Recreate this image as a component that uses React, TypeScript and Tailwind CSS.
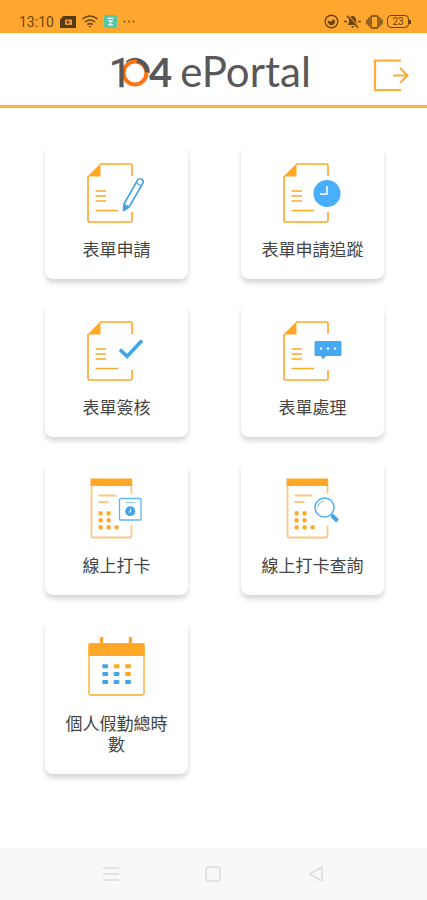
import type { ReactNode } from "react";

const ORANGE = "#ffa726";
const PALE = "#ffc581";
const BLUE = "#42a5e8";

function IconFrame({ children }: { children: ReactNode }) {
  return (
    <svg width="79" height="64" viewBox="0 0 79 64" fill="none" aria-hidden>
      {children}
    </svg>
  );
}

function FormSheet() {
  return (
    <g>
      <path d="M23 3H53Q55 3 55 5V15M55 51V59Q55 61 53 61H13Q11 61 11 59V15" stroke={ORANGE} strokeWidth="1.6" />
      <path d="M10.500 15.500L23.500 2.500V15.500Z" fill={ORANGE} />
      <path d="M18.500 30H29M18.500 35H29M18.500 40H29M18.500 49.500H41" stroke={ORANGE} strokeWidth="1.500" />
    </g>
  );
}

function PunchSheet() {
  return (
    <g>
      <path d="M54.500 8V17M54.500 48.500V58.500Q54.500 60.500 52.500 60.500H16.500Q14.500 60.500 14.500 58.500V8" stroke={PALE} strokeWidth="1.800" />
      <path d="M13.500 1.500H55.200V9H13.500Z" fill={ORANGE} />
      <path d="M21.500 18.500H39.500M21.500 25H31.500" stroke={PALE} strokeWidth="1.800" />
      {[36.3, 43.3, 50.3].map((y) => (
        <g key={y} fill={ORANGE}>
          <rect x="21.500" y={y - 2} width="4.200" height="4.200" rx="1.400" />
          <rect x="29.500" y={y - 2} width="4.200" height="4.200" rx="1.400" />
        </g>
      ))}
      <rect x="37.500" y="48.300" width="4.200" height="4.200" rx="1.400" fill={ORANGE} />
    </g>
  );
}

function ApplyIcon() {
  return (
    <IconFrame>
      <FormSheet />
      <g stroke={BLUE} strokeWidth="1.600" strokeLinejoin="round">
        <path d="M47 43L60.300 19.500Q62 16.800 64.600 18.300Q67.200 19.900 65.700 22.500L52.300 45.500L47 49Z" />
        <path d="M59 21.800L64.300 25" strokeWidth="1.200" />
        <path d="M46.800 43.500L46.500 49.500L52 46Z" fill={BLUE} />
      </g>
    </IconFrame>
  );
}

function TrackIcon() {
  return (
    <IconFrame>
      <FormSheet />
      <circle cx="54" cy="32.500" r="13.600" fill="#4aaeff" />
      <path d="M54 25V33.200H47" stroke="#e3f3ff" strokeWidth="1.800" />
    </IconFrame>
  );
}

function SignIcon() {
  return (
    <IconFrame>
      <FormSheet />
      <path d="M43 30.500L50 37.500L65 21.500" stroke={BLUE} strokeWidth="3.600" />
    </IconFrame>
  );
}

function ProcessIcon() {
  return (
    <IconFrame>
      <FormSheet />
      <path d="M43 22H67Q68.500 22 68.500 23.500V35.500Q68.500 37 67 37H53L50.300 40.300L47.500 37H43Q41.500 37 41.500 35.500V23.500Q41.500 22 43 22Z" fill="#45a8f0" />
      <g fill="#e8f5ff">
        <circle cx="48" cy="29.500" r="1.300" />
        <circle cx="55" cy="29.500" r="1.300" />
        <circle cx="62" cy="29.500" r="1.300" />
      </g>
    </IconFrame>
  );
}

function PunchIcon() {
  return (
    <IconFrame>
      <PunchSheet />
      <rect x="42.500" y="21.500" width="21.500" height="21.500" rx="1" stroke="#62b5f3" strokeWidth="1.300" />
      <path d="M48 25.500H58" stroke="#8cc9f6" />
      <circle cx="53.200" cy="34.300" r="5" fill={BLUE} />
      <path d="M53.500 31.500V35H51.500" stroke="#d5edff" />
    </IconFrame>
  );
}

function PunchSearchIcon() {
  return (
    <IconFrame>
      <PunchSheet />
      <circle cx="51.500" cy="30.500" r="9.500" stroke="#58b0ef" strokeWidth="1.500" />
      <path d="M45 30Q45.500 25 51 24" stroke="#8cc9f6" strokeWidth="1.200" />
      <path d="M58 37L60 39" stroke={BLUE} strokeWidth="1.800" />
      <path d="M59 38.500L64.500 44" stroke={BLUE} strokeWidth="4" />
    </IconFrame>
  );
}

const CALENDAR_DAYS = [
  [BLUE, ORANGE, ORANGE],
  [BLUE, BLUE, ORANGE],
  [BLUE, BLUE, BLUE],
];

function CalendarIcon() {
  return (
    <IconFrame>
      <path d="M24.500 2V10M53.500 2V10" stroke={ORANGE} strokeWidth="3.400" />
      <rect x="12" y="9" width="55" height="51" rx="1.500" stroke={ORANGE} strokeWidth="1.300" />
      <path d="M11.500 10Q11.500 8.300 13 8.300H66Q67.500 8.300 67.500 10V21H11.500Z" fill={ORANGE} />
      {CALENDAR_DAYS.map((row, r) =>
        row.map((color, c) => (
          <rect key={`${r}-${c}`} x={25.3 + c * 11.4} y={29.3 + r * 7.8} width="5.800" height="4" rx="1" fill={color} />
        )),
      )}
    </IconFrame>
  );
}

const MENU = [
  { label: "表單申請", Icon: ApplyIcon },
  { label: "表單申請追蹤", Icon: TrackIcon },
  { label: "表單簽核", Icon: SignIcon },
  { label: "表單處理", Icon: ProcessIcon },
  { label: "線上打卡", Icon: PunchIcon },
  { label: "線上打卡查詢", Icon: PunchSearchIcon },
  { label: "個人假勤總時數", Icon: CalendarIcon },
];

function StatusBar() {
  return (
    <div className="flex h-[33px] items-end justify-between bg-[#ffa72f] pr-4 pb-1 pl-[19px] text-[#6b4510]">
      <div className="flex h-[15px] items-center gap-[6px]">
        <span className="text-sm leading-4">13:10</span>
        <svg width="16" height="12" viewBox="0 0 16 12" aria-hidden>
          <path d="M3.500 0H16V12H0V3.500Z" fill="#573a10" />
          <path d="M5 3.500H12V9H5Z" fill="#e39a35" />
          <path d="M7 4.500L10 6.200L7 8Z" fill="#573a10" />
        </svg>
        <svg width="16" height="13" viewBox="0 0 16 13" fill="none" stroke="currentColor" strokeWidth="1.600" aria-hidden>
          <path d="M.5 4Q8-2 15.500 4M3 7Q8 3 13 7M5.300 9.700Q8 7.500 10.700 9.700" />
          <path d="M6.500 11L8 12.800L9.500 11Z" fill="currentColor" stroke="none" />
        </svg>
        <svg width="13" height="13" viewBox="0 0 13 13" fill="none" aria-hidden>
          <rect width="13" height="13" rx="2.500" fill="#50c9a4" />
          <path d="M3.500 3.300H9.500M4 5.800H9M6.500 6V9.500M4 9.800H9" stroke="#e4fff5" strokeWidth="1.300" />
        </svg>
        <svg width="12" height="3" viewBox="0 0 12 3" fill="currentColor" aria-hidden>
          <circle cx="1.500" cy="1.500" r=".9" />
          <circle cx="6" cy="1.500" r=".9" />
          <circle cx="10.500" cy="1.500" r=".9" />
        </svg>
      </div>
      <div className="flex h-[15px] items-center gap-1">
        <svg width="15" height="15" viewBox="0 0 15 15" fill="none" aria-hidden>
          <circle cx="7.500" cy="7.500" r="6.300" stroke="currentColor" strokeWidth="1.400" />
          <path d="M3.500 6.500L7 7.500L9.500 5L11.300 7.500Q10.500 11 7.500 11.300Q4 11 3.500 6.500Z" fill="currentColor" />
        </svg>
        <svg width="19" height="15" viewBox="0 0 19 15" fill="none" aria-hidden>
          <path d="M4.500 11L6 8.500V6Q6.500 2.500 9.500 1.800Q12.800 2.500 13.200 6V8.500L14.700 11ZM8 12H11.500L9.800 14Z" fill="currentColor" />
          <path d="M4.800 1.200L15.800 13.200" stroke="#ffa72f" strokeWidth="1.200" />
          <path d="M4 1.800L15 13.800" stroke="currentColor" strokeWidth="1.600" />
          <path d="M1 7.500H4M15 7.500H18" stroke="currentColor" strokeWidth="1.500" />
        </svg>
        <svg width="17" height="14" viewBox="0 0 17 14" fill="none" stroke="currentColor" strokeWidth="1.400" aria-hidden>
          <rect x="5" y="1" width="7" height="12" rx="1" />
          <path d="M3 2.500V11.500M14 2.500V11.500M1 4.500V9.500M16 4.500V9.500" />
        </svg>
        <div className="flex items-center">
          <span className="flex h-[13px] w-[22px] items-center justify-center rounded border border-current text-[10px] leading-none">
            23
          </span>
          <span className="h-1 w-[2px] bg-current" />
        </div>
      </div>
    </div>
  );
}

function Logo() {
  return (
    <h1 className="flex items-center justify-center gap-[6px] text-[#58585a]">
      <svg width="62" height="50" viewBox="0 0 62 50" className="overflow-visible" role="img" aria-label="104">
        <path d="M15 16.800A12.800 12.800 0 0 1 36 27" fill="none" stroke="#58585a" strokeWidth="3.600" />
        <circle cx="23" cy="27" r="11.400" fill="#fff" stroke="#ff7410" strokeWidth="4" />
        <path d="M25 14.500A12 12 0 0 1 35 26" fill="none" stroke="#58585a" strokeWidth="4" />
        <g fill="currentColor" fontSize="40">
          <text x="-3" y="41" fontFamily="Roboto, sans-serif" stroke="currentColor" strokeWidth=".5">1</text>
          <text x="37" y="41" fontFamily="Lato, sans-serif" fontWeight="700">4</text>
        </g>
      </svg>
      <span className="font-[Lato,sans-serif] text-[42px] leading-[50px]">ePortal</span>
    </h1>
  );
}

function Header() {
  return (
    <header className="grid h-[75px] grid-cols-[32px_1fr_36px] items-center border-b-[3px] border-[#ffb03e] px-[18px] pt-1">
      <span />
      <Logo />
      <button type="button" aria-label="登出" className="pt-2">
        <svg width="36" height="32" viewBox="0 0 36 32" fill="none" stroke="#ffac38" strokeWidth="2.200" aria-hidden>
          <path d="M28 1.500H2V31H28" />
          <path d="M20 16.500H34M27 9L34.500 16.500L27 24" />
        </svg>
      </button>
    </header>
  );
}

function SystemNav() {
  return (
    <nav className="grid h-[52px] grid-cols-3 items-center bg-[#f8f8f8] px-[60px] text-[#dcdcdc]">
      <button type="button" aria-label="Menu" className="flex justify-center">
        <svg width="16" height="16" viewBox="0 0 16 16" fill="none" stroke="currentColor" strokeWidth="1.500" aria-hidden>
          <path d="M0 2H16M0 8H16M0 14H16" />
        </svg>
      </button>
      <button type="button" aria-label="Home" className="flex justify-center">
        <svg width="16" height="16" viewBox="0 0 16 16" fill="none" stroke="currentColor" strokeWidth="1.500" aria-hidden>
          <rect x="1" y="1" width="14" height="14" rx="3" />
        </svg>
      </button>
      <button type="button" aria-label="Back" className="flex justify-center">
        <svg width="16" height="16" viewBox="0 0 16 16" fill="none" stroke="currentColor" strokeWidth="1.500" strokeLinejoin="round" aria-hidden>
          <path d="M14 1V15L1.500 8Z" />
        </svg>
      </button>
    </nav>
  );
}

export default function App() {
  return (
    <div className="flex min-h-screen flex-col bg-white font-[Roboto,'Noto_Sans_CJK_TC',sans-serif]">
      <StatusBar />
      <Header />
      <main className="grid flex-1 grid-cols-2 content-start gap-x-[53px] gap-y-6 pt-[37px] pr-[43px] pb-8 pl-[45px]">
        {MENU.map(({ label, Icon }) => (
          <button
            key={label}
            type="button"
            className="flex flex-col items-center rounded-lg bg-white px-4 pt-4 pb-[18px] shadow-[0_4px_5px_rgba(0,0,0,0.16)]"
          >
            <Icon />
            <span className="mt-[15px] text-[17px] leading-[21px] text-[#444]">{label}</span>
          </button>
        ))}
      </main>
      <SystemNav />
    </div>
  );
}
